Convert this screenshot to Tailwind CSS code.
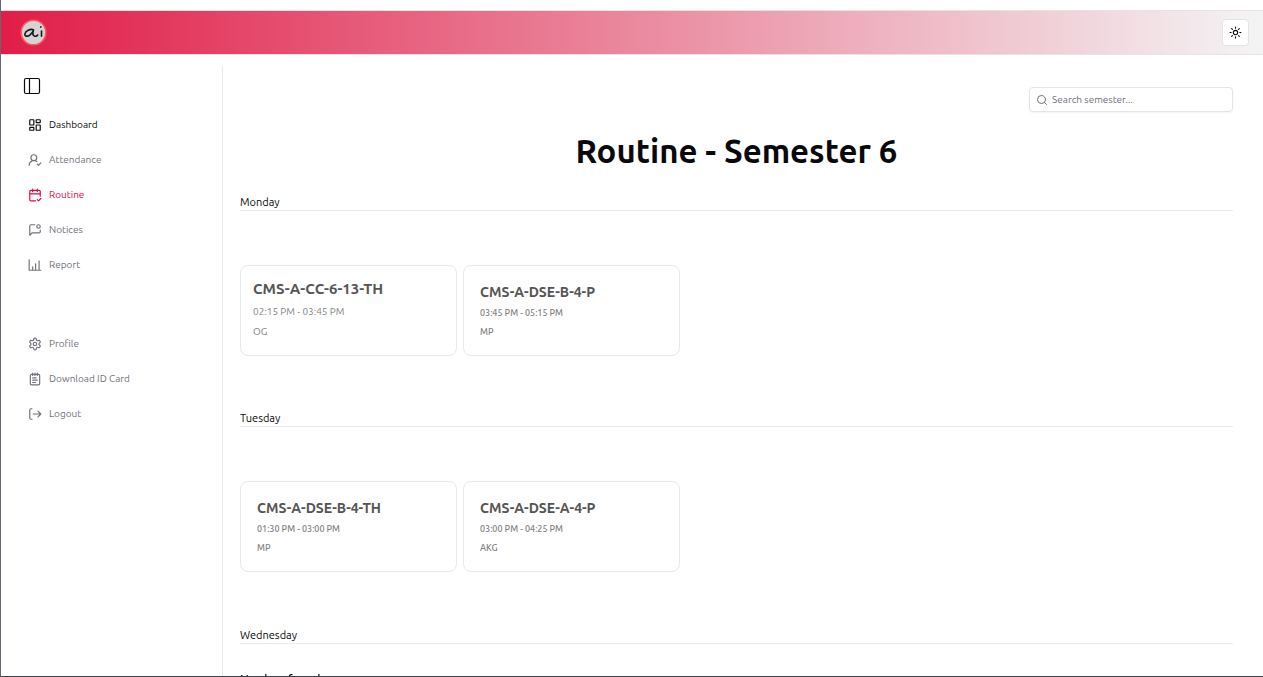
<!DOCTYPE html>
<html lang="en">
<head>
<meta charset="utf-8">
<title>Routine</title>
<script src="https://cdn.jsdelivr.net/npm/@tailwindcss/browser@4"></script>
</head>
<body class="bg-white text-zinc-950 font-['Ubuntu','Noto_Sans',sans-serif]">
<svg class="hidden">
  <defs>
    <symbol id="search" viewBox="0 0 24 24"><circle cx="11" cy="11" r="8"/><path d="m21 21-4.300-4.300"/></symbol>
  </defs>
</svg>
<div class="flex h-screen flex-col overflow-hidden border-b border-l border-b-zinc-700 border-l-[#666674] pt-[10px]">
  <header class="flex h-[45px] shrink-0 items-center justify-between border-y border-zinc-200 bg-linear-to-r/srgb from-[#e11d48] to-zinc-100 pr-3.5 pl-[19px]">
    <a href="#" aria-label="Home">
      <svg class="size-[27px]" viewBox="0 0 27 27" fill="none" stroke-linecap="round" stroke-linejoin="round">
        <circle cx="13.500" cy="13.500" r="12.300" fill="#d4d4d4" stroke="#fb5a5c" stroke-width="1.600"/>
        <path d="M13.500 10.800c-3.200-1.300-8 1-8.600 4-.4 2.900 2.900 3 5.200 1 1.400-1.200 2.500-2.600 3.300-4.300-1 3-.8 5 1.300 5.700 1.300.3 2.300-.1 3-1.200M21.500 12v5.200M20.800 7.800v.5" stroke="#18181b" stroke-width="1.600"/>
      </svg>
    </a>
    <button aria-label="Toggle theme" class="flex size-[27px] items-center justify-center rounded border border-zinc-200 bg-white">
      <svg class="size-[13px]" viewBox="0 0 24 24" fill="none" stroke="currentColor" stroke-width="2" stroke-linecap="round"><circle cx="12" cy="12" r="4"/><path d="M12 2v2M12 20v2M4.900 4.900l1.400 1.400M17.700 17.700l1.400 1.400M2 12h2M20 12h2M6.300 17.700l-1.400 1.400M19.100 4.900l-1.400 1.400"/></svg>
    </button>
  </header>
  <div class="flex min-h-0 flex-1">
    <aside class="mt-[11px] w-[222px] shrink-0 border-r border-[#e9e9eb] pt-[11px] pl-[22px]">
      <button aria-label="Toggle sidebar" class="block">
        <svg class="size-[18px]" viewBox="0 0 18 18" fill="none" stroke="currentColor" stroke-width="1.200"><rect x="1.500" y="1.500" width="15" height="15" rx="1.500"/><path d="M6.500 1.500v15"/></svg>
      </button>
      <nav class="mt-3 pl-[5px] text-[10px] text-zinc-500 [&_svg]:size-[14px] [&_a]:flex [&_a]:h-[35px] [&_a]:items-center [&_a]:gap-[7px] [&_svg]:fill-none [&_svg]:stroke-current [&_svg]:stroke-2">
        <a href="#" class="text-zinc-950"><svg viewBox="0 0 24 24"><rect x="3" y="3" width="7" height="9" rx="1"/><rect x="14" y="3" width="7" height="5" rx="1"/><rect x="14" y="12" width="7" height="9" rx="1"/><rect x="3" y="16" width="7" height="5" rx="1"/></svg>Dashboard</a>
        <a href="#"><svg viewBox="0 0 24 24" stroke-linecap="round" stroke-linejoin="round"><path d="M2 21a8 8 0 0 1 13.292-6"/><circle cx="10" cy="8" r="5"/><path d="m16 19 2 2 4-4"/></svg>Attendance</a>
        <a href="#" class="text-rose-600"><svg viewBox="0 0 24 24" stroke-linecap="round" stroke-linejoin="round"><path d="M8 2v4M16 2v4M21 14V6a2 2 0 0 0-2-2H5a2 2 0 0 0-2 2v14a2 2 0 0 0 2 2h8M3 10h18m-5 10 2 2 4-4"/></svg>Routine</a>
        <a href="#"><svg viewBox="0 0 24 24" stroke-linecap="round" stroke-linejoin="round"><path d="M11.700 3H5a2 2 0 0 0-2 2v16l4-4h12a2 2 0 0 0 2-2v-2.700"/><circle cx="18" cy="6" r="3"/></svg>Notices</a>
        <a href="#"><svg viewBox="0 0 24 24" stroke-linecap="round" stroke-linejoin="round"><path d="M2 3v18h20M8 21v-6M13 21V10M19 21V5"/></svg>Report</a>
        <a href="#" class="mt-11"><svg viewBox="0 0 24 24" stroke-linecap="round" stroke-linejoin="round"><path d="M12.220 2h-.44a2 2 0 0 0-2 2v.18a2 2 0 0 1-1 1.730l-.43.25a2 2 0 0 1-2 0l-.15-.08a2 2 0 0 0-2.730.73l-.22.38a2 2 0 0 0 .73 2.730l.15.1a2 2 0 0 1 1 1.720v.51a2 2 0 0 1-1 1.740l-.15.09a2 2 0 0 0-.73 2.730l.22.38a2 2 0 0 0 2.730.73l.15-.08a2 2 0 0 1 2 0l.43.25a2 2 0 0 1 1 1.730V20a2 2 0 0 0 2 2h.44a2 2 0 0 0 2-2v-.18a2 2 0 0 1 1-1.730l.43-.25a2 2 0 0 1 2 0l.15.08a2 2 0 0 0 2.730-.73l.22-.39a2 2 0 0 0-.73-2.730l-.15-.08a2 2 0 0 1-1-1.740v-.5a2 2 0 0 1 1-1.740l.15-.09a2 2 0 0 0 .73-2.730l-.22-.38a2 2 0 0 0-2.730-.73l-.15.08a2 2 0 0 1-2 0l-.43-.25a2 2 0 0 1-1-1.730V4a2 2 0 0 0-2-2z"/><circle cx="12" cy="12" r="3"/></svg>Profile</a>
        <a href="#"><svg viewBox="0 0 24 24" stroke-linecap="round" stroke-linejoin="round"><path d="M8 2v4M12 2v4M16 2v4M8 10h6M8 14h8M8 18h5"/><rect x="4" y="4" width="16" height="18" rx="2"/></svg>Download ID Card</a>
        <a href="#"><svg viewBox="0 0 24 24" stroke-linecap="round" stroke-linejoin="round"><path d="M7 3H5a2 2 0 0 0-2 2v14a2 2 0 0 0 2 2h2M9 12h13M17 7l5 5-5 5"/></svg>Logout</a>
      </nav>
    </aside>
    <main class="min-w-0 flex-1 overflow-hidden pt-8 pr-[30px] pl-[17px]">
      <label class="ml-auto flex h-[25px] w-[204px] items-center gap-1 rounded border border-zinc-200 px-1.5 shadow-xs">
        <svg class="size-3 shrink-0 text-zinc-500" fill="none" stroke="currentColor" stroke-width="2" stroke-linecap="round"><use href="#search"/></svg>
        <input type="search" aria-label="Search semester" placeholder="Search semester..." class="min-w-0 flex-1 text-[10px] outline-none placeholder:text-zinc-500">
      </label>
      <h1 class="mt-[19px] text-center text-[33px] leading-10 font-bold">Routine - Semester 6</h1>
      <section class="mt-[23px] pb-[54px]">
        <h2 class="border-b border-[#e9e9eb] text-[11px] leading-4">Monday</h2>
        <div class="mt-[54px] flex gap-1.5">
          <article class="h-[91px] w-[217px] rounded-lg border border-[#e9e9eb] px-3 pt-[13px] text-[#808080]">
            <h3 class="text-[15px] leading-5 font-bold text-[#555]">CMS-A-CC-6-13-TH</h3>
            <p class="mt-[5px] text-[10px] leading-4">02:15 PM - 03:45 PM</p>
            <p class="mt-1 text-[10px] leading-4">OG</p>
          </article>
          <article class="h-[91px] w-[217px] rounded-lg border border-[#e9e9eb] px-4 pt-4 text-[#808080]">
            <h3 class="text-[14px] leading-5 font-bold text-[#555]">CMS-A-DSE-B-4-P</h3>
            <p class="mt-[3px] text-[9px] leading-4 font-medium">03:45 PM - 05:15 PM</p>
            <p class="mt-[3px] text-[9px] leading-4 font-medium">MP</p>
          </article>
        </div>
      </section>
      <section class="pb-[55px]">
        <h2 class="border-b border-[#e9e9eb] text-[11px] leading-4">Tuesday</h2>
        <div class="mt-[54px] flex gap-1.5">
          <article class="h-[91px] w-[217px] rounded-lg border border-[#e9e9eb] px-4 pt-4 text-[#808080]">
            <h3 class="text-[14px] leading-5 font-bold text-[#555]">CMS-A-DSE-B-4-TH</h3>
            <p class="mt-[3px] text-[9px] leading-4 font-medium">01:30 PM - 03:00 PM</p>
            <p class="mt-[3px] text-[9px] leading-4 font-medium">MP</p>
          </article>
          <article class="h-[91px] w-[217px] rounded-lg border border-[#e9e9eb] px-4 pt-4 text-[#808080]">
            <h3 class="text-[14px] leading-5 font-bold text-[#555]">CMS-A-DSE-A-4-P</h3>
            <p class="mt-[3px] text-[9px] leading-4 font-medium">03:00 PM - 04:25 PM</p>
            <p class="mt-[3px] text-[9px] leading-4 font-medium">AKG</p>
          </article>
        </div>
      </section>
      <section>
        <h2 class="border-b border-[#e9e9eb] text-[11px] leading-4">Wednesday</h2>
        <p class="mt-7 text-[12px] leading-4 font-medium">No class found</p>
      </section>
    </main>
  </div>
</div>
</body>
</html>
